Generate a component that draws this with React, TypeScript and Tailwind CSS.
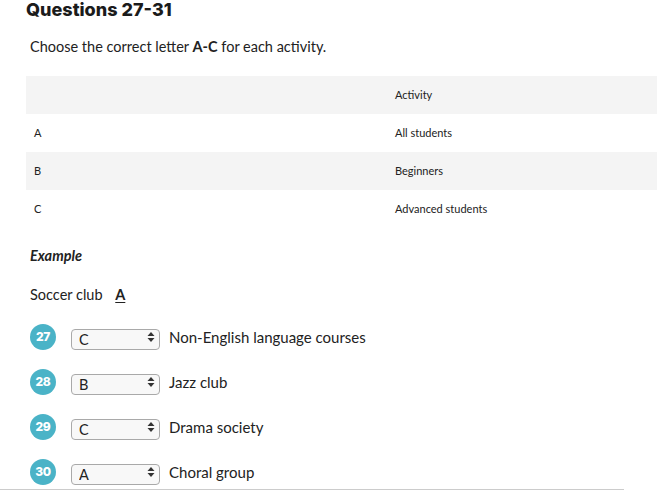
const ROWS = [
  { letter: "A", text: "All students" },
  { letter: "B", text: "Beginners" },
  { letter: "C", text: "Advanced students" },
];

const QUESTIONS = [
  { num: 27, value: "C", label: "Non-English language courses" },
  { num: 28, value: "B", label: "Jazz club" },
  { num: 29, value: "C", label: "Drama society" },
  { num: 30, value: "A", label: "Choral group" },
];

function Arrows() {
  return (
    <svg width="8" height="12" viewBox="0 0 8 12" className="pointer-events-none absolute right-[5px] top-1/2 -translate-y-1/2">
      <path d="M4 1 L7.5 5 H0.5 Z" fill="#333" />
      <path d="M4 11 L7.5 7 H0.5 Z" fill="#333" />
    </svg>
  );
}

export default function App() {
  return (
    <main className="h-[490px] w-[657px] overflow-hidden bg-white font-['Lato',sans-serif] text-[#222]">
      <div className="pl-[26px]">
        <h1 className="font-['Inter',sans-serif] text-[18px] font-extrabold leading-5 text-[#1b1b1b]">
          Questions 27-31
        </h1>
        <p className="mt-[17px] pl-1 text-[14.5px] leading-5">
          Choose the correct letter <b>A-C</b> for each activity.
        </p>

        <div className="mt-[19px] text-[11px] text-[#222]">
          <div className="grid h-[38px] grid-cols-[361px_1fr] items-center bg-[#f4f4f4]">
            <span />
            <span className="pl-2">Activity</span>
          </div>
          {ROWS.map((r, i) => (
            <div
              key={r.letter}
              className={
                "grid h-[38px] grid-cols-[361px_1fr] items-center " +
                (i % 2 === 1 ? "bg-[#f4f4f4]" : "bg-white")
              }
            >
              <span className="pl-2">{r.letter}</span>
              <span className="pl-2">{r.text}</span>
            </div>
          ))}
        </div>

        <p className="mt-[18px] pl-1 text-[14.5px] font-bold italic leading-5">Example</p>
        <p className="mt-[19px] pl-1 text-[14.5px] leading-5">
          Soccer club <span className="ml-[9px] font-bold underline underline-offset-2">A</span>
        </p>

        <div className="mt-[19px] flex flex-col gap-[19px] pl-1">
          {QUESTIONS.map((q) => (
            <div key={q.num} className="flex h-[26px] items-center">
              <span className="flex h-[26px] w-[26px] items-center justify-center rounded-full bg-[#4ab3c7] font-['Inter',sans-serif] text-[12px] font-extrabold tracking-[-0.3px] text-white">
                {q.num}
              </span>
              <div className="relative ml-[15px] h-[21px] w-[89px]">
                <select
                  defaultValue={q.value}
                  className="h-full w-full appearance-none rounded-[4px] border border-[#a9a9a9] bg-[#f8f8f8] pl-[7px] text-[14.5px] leading-none text-[#222] outline-none"
                >
                  <option value="A">A</option>
                  <option value="B">B</option>
                  <option value="C">C</option>
                </select>
                <Arrows />
              </div>
              <span className="ml-[9px] text-[15px]">{q.label}</span>
            </div>
          ))}
        </div>
      </div>
      <div className="mt-[4px] h-px w-[624px] bg-[#cccccc]" />
    </main>
  );
}
